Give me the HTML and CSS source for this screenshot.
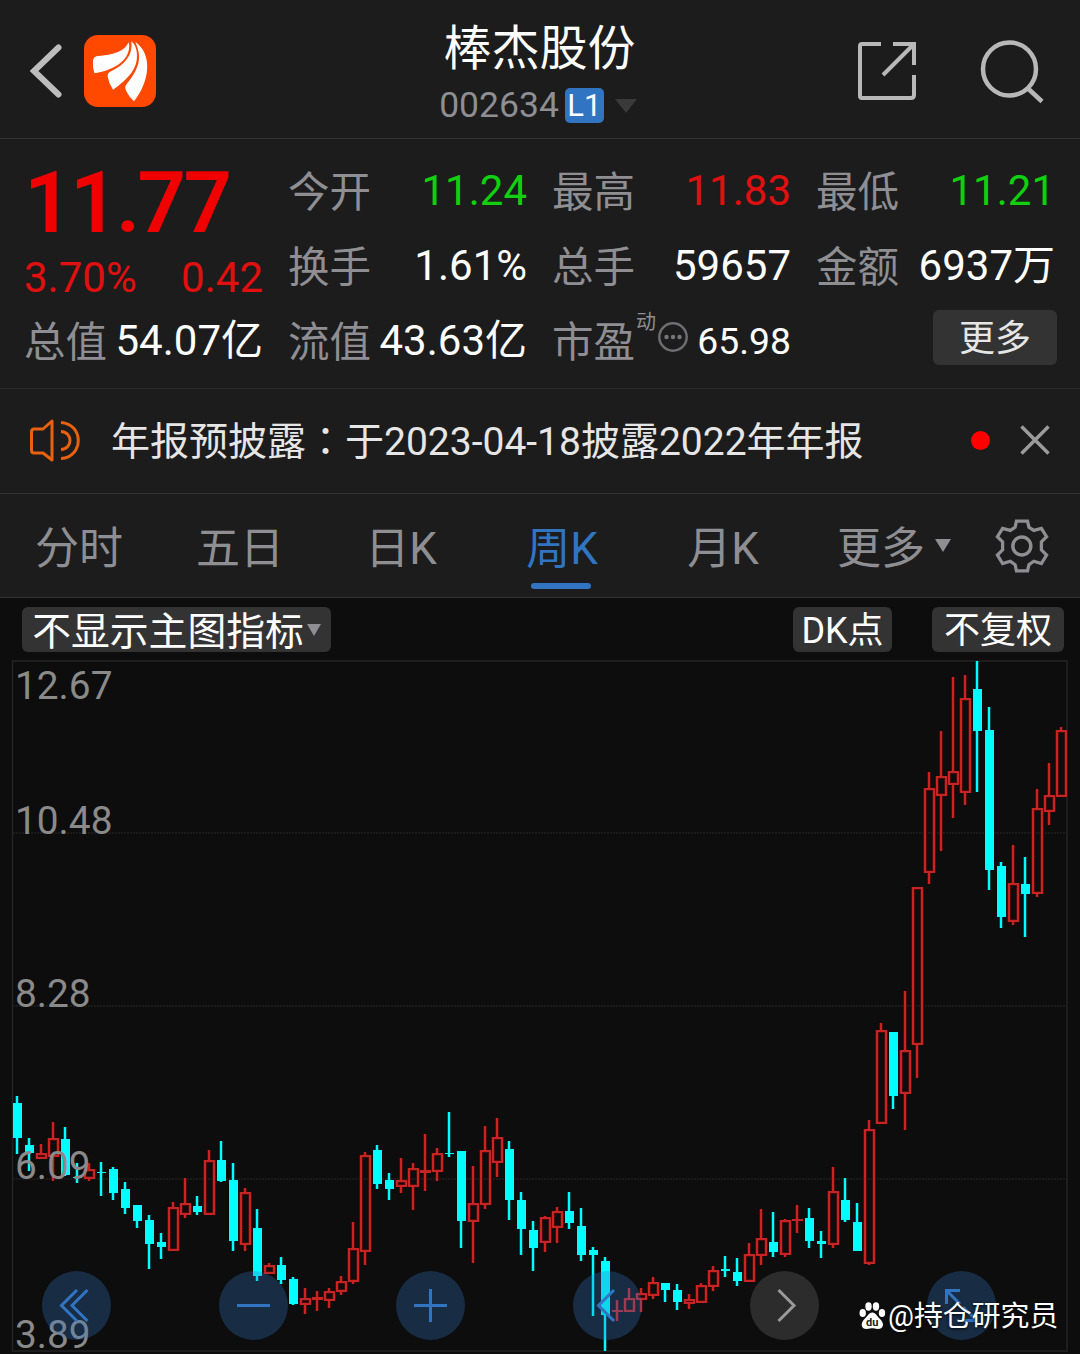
FILE: index.html
```html
<!DOCTYPE html>
<html lang="zh-CN">
<head>
<meta charset="utf-8">
<title>棒杰股份 002634</title>
<link rel="stylesheet" href="styles.css">
</head>
<body>
<header class="topbar">
  <div class="topbar-left">
    <svg class="back" width="36" height="56" viewBox="0 0 36 56"><path d="M30.500 4.500 6 28l24.500 23.500" fill="none" stroke="#bdbdbd" stroke-width="6" stroke-linecap="round"/></svg>
    <svg class="logo" width="72" height="72" viewBox="253 106 216 216"><rect x="253" y="106" width="216" height="216" rx="42" fill="#ff4800"/><g fill="#fff"><path d="M387 128C375 154 345 166 290 170Q282 172 280 182 278 202 284 221C335 212 388 188 389 138Z"/><path d="M395 125C400 165 378 195 330 217Q323 221 324 231 327 250 340 270C385 238 421 203 410 150Q405 132 395 125Z"/><path d="M407 127C427 172 422 203 379 256Q374 262 380 275 388 292 403 305C448 250 462 165 407 127Z"/></g></svg>
  </div>
  <div class="title">
    <h1>棒杰股份</h1>
    <div class="code"><span>002634</span><b class="level">L1</b><i class="tri tri-dark"></i></div>
  </div>
  <div class="topbar-right">
    <svg width="60" height="62" viewBox="857 40 60 62" fill="none" stroke="#b8b8b8" stroke-width="4"><path d="M881 44H862Q860 44 860 46V96Q860 98 862 98H911Q914 98 914 95V75M893 44H914V65M914 44 883 75"/></svg>
    <svg width="66" height="66" viewBox="979 37.500 66 66" fill="none" stroke="#b8b8b8" stroke-width="4.500"><circle cx="1009.500" cy="68.500" r="26.500"/><path d="M1028 88 1042 101"/></svg>
  </div>
</header>

<section class="quote">
  <div class="last">
    <strong>11.77</strong>
    <div class="change"><span>3.70%</span><span>0.42</span></div>
  </div>
  <div class="cell"><label>今开</label><span class="down">11.24</span></div>
  <div class="cell"><label>最高</label><span class="up">11.83</span></div>
  <div class="cell"><label>最低</label><span class="down">11.21</span></div>
  <div class="cell"><label>换手</label><span>1.61%</span></div>
  <div class="cell"><label>总手</label><span>59657</span></div>
  <div class="cell"><label>金额</label><span>6937万</span></div>
  <div class="cell"><label>总值</label><span>54.07亿</span></div>
  <div class="cell"><label>流值</label><span>43.63亿</span></div>
  <div class="cell"><label>市盈</label><sup>动</sup><svg class="info" width="32" height="32" viewBox="0 0 32 32"><circle cx="16" cy="16" r="13.700" fill="none" stroke="#6e6e70" stroke-width="2.500"/><g fill="#77777a"><circle cx="9.500" cy="16" r="2.200"/><circle cx="16" cy="16" r="2.200"/><circle cx="22.500" cy="16" r="2.200"/></g></svg><span class="pe">65.98</span></div>
  <div class="cell cell-more"><button class="more">更多</button></div>
</section>

<section class="notice">
  <svg width="54" height="46" viewBox="28 417 54 46" fill="none" stroke="#e8610f" stroke-width="3"><path d="M52 421 43 429H34Q31.500 429 31.500 432V450Q31.500 453 34 453H43L52 460ZM61 422.500C84 424 84 457 61 458.500M61 431.500C73 432 73 449 61 449.500" stroke-linejoin="round"/></svg>
  <p>年报预披露<span class="colon" lang="zh-TW">：</span>于2023-04-18披露2022年年报</p>
  <i class="dot"></i>
  <svg width="30" height="30" viewBox="0 0 30 30"><path d="M1.500 1.500 28.500 28.500M28.500 1.500 1.500 28.500" stroke="#9c9c9c" stroke-width="3.500"/></svg>
</section>

<nav class="tabs">
  <a>分时</a><a>五日</a><a>日K</a><a class="active">周K</a><a>月K</a>
  <a class="tab-more">更多<i class="tri"></i></a>
  <svg class="gear" width="54" height="54" viewBox="438 58 154 156" fill="none" stroke="#8e8e93" stroke-width="9.500"><path d="M499 64H531L535 82 549 91 571 85 586 109 571 124V147L586 162 571 187 549 180 535 190 531 208H499L495 190 481 180 459 187 444 162 459 147V124L444 109 459 85 481 91 495 82Z"/><circle cx="514.500" cy="136" r="26" stroke-width="10"/></svg>
</nav>

<main class="chart">
  <div class="tools">
    <button class="pill pill-main">不显示主图指标<i class="tri tri-sm"></i></button>
    <button class="pill pill-dk">DK点</button>
    <button class="pill pill-fq">不复权</button>
  </div>
  <svg class="plot" viewBox="0 654 1080 700" width="1080" height="700">
    <rect x="12.500" y="661" width="1054.500" height="690" fill="none" stroke="#242424" stroke-width="1.500"/>
    <path d="M13 833H1066M13 1006H1066M13 1179H1066" stroke="#202020" stroke-width="1.500" stroke-dasharray="2 1"/>
    <g id="candles" shape-rendering="crispEdges"></g>
    <g class="axis">
      <text x="15" y="699">12.67</text>
      <text x="15" y="834">10.48</text>
      <text x="15" y="1007">8.28</text>
      <text x="15" y="1179">6.09</text>
      <text x="15" y="1348">3.89</text>
    </g>
  </svg>
  <div class="controls">
    <button class="ctl"><svg viewBox="0 0 69 69"><path d="M35 19 19.500 34.500 35 50M45.500 19 30 34.500 45.500 50"/></svg></button>
    <button class="ctl"><svg viewBox="0 0 69 69"><path d="M18 34.500H51"/></svg></button>
    <button class="ctl"><svg viewBox="0 0 69 69"><path d="M18 34.500H51M34.500 18V51"/></svg></button>
    <button class="ctl"><svg viewBox="0 0 69 69"><path d="M41 19 25.500 34.500 41 50"/></svg></button>
    <button class="ctl ctl-off"><svg viewBox="0 0 69 69"><path d="M28.500 19 44 34.500 28.500 50"/></svg></button>
    <button class="ctl"><svg viewBox="0 0 69 69"><path d="M33 19.500H19.500V33M19.500 19.500 33 33M36 49.500H49.500V36M49.500 49.500 36 36"/></svg></button>
  </div>
  <div class="watermark">
    <svg width="27" height="28" viewBox="0 0 27 28"><g fill="#fff"><ellipse cx="3.700" cy="11" rx="3.200" ry="4"/><ellipse cx="9.500" cy="4.500" rx="3.200" ry="4.200"/><ellipse cx="17" cy="4.500" rx="3.200" ry="4.200"/><ellipse cx="23" cy="11" rx="3.200" ry="4"/><path d="M13.300 10.500C17 10.500 18 14.500 21.500 17.500 26 22 24 27 19 27 16 27 15 26.300 13.300 26.300S10.500 27 7.500 27C2.500 27 1 22 5 17.500 8.500 14.500 9.600 10.500 13.300 10.500Z"/></g><text x="13.300" y="24" text-anchor="middle" class="du">du</text></svg>
    <span>@持仓研究员</span>
  </div>
</main>
<script src="chart.js"></script>
</body>
</html>
```
FILE: styles.css
```css
* { box-sizing: border-box; }
body {
  margin: 0;
  width: 1080px;
  height: 1354px;
  overflow: hidden;
  background: #1c1c1c;
  color: #fff;
  font-family: Roboto, "Noto Sans CJK SC", sans-serif;
  font-weight: 400;
  line-height: 1.2;
}
button { border: 0; padding: 0; font: inherit; color: inherit; }
svg { display: block; flex: none; }
h1, p { margin: 0; }

.tri {
  display: inline-block;
  border: 8px solid transparent;
  border-top: 13px solid #8e8e93;
  border-bottom: 0;
}
.tri-dark { border-width: 14px 11px 0; border-top-color: #3a3a3a; }
.tri-sm { border-width: 12px 7.5px 0; }

/* Header */
.topbar {
  height: 139px;
  border-bottom: 1px solid #333;
  display: grid;
  grid-template-columns: 300px 1fr 300px;
}
.topbar-left { display: flex; align-items: center; padding: 4px 0 0 28px; }
.logo { margin-left: 20px; }
.title { display: flex; flex-direction: column; align-items: center; padding: 15px 1px 0 0; }
h1 { font-size: 48px; line-height: 68px; font-weight: 400; }
.code {
  display: flex;
  align-items: center;
  height: 45px;
  margin-right: 3px;
  font-size: 35.500px;
  color: #8e8e93;
}
.level {
  width: 39px;
  height: 35px;
  margin: 0 11px 0 6px;
  border-radius: 5px;
  background: #3174c2;
  color: #fff;
  font-size: 31px;
  font-weight: 400;
  line-height: 35px;
  text-align: center;
}
.topbar-right { display: flex; align-items: center; justify-content: flex-end; gap: 62px; padding: 4px 35px 0 0; }

/* Quote */
.quote {
  height: 250px;
  padding: 15px 0 0 24px;
  border-bottom: 1px solid #2c2c2e;
  display: grid;
  grid-template-columns: repeat(4, 239px);
  grid-template-rows: repeat(3, 75px);
  column-gap: 25px;
}
.last { grid-row: span 2; color: #f00000; }
.last strong { display: block; font-size: 85px; font-weight: 600; line-height: 98px; letter-spacing: -2.600px; }
.change { display: flex; justify-content: space-between; margin-top: -1px; font-size: 42px; line-height: 54px; color: #e01010; }
.cell {
  display: flex;
  align-items: center;
  font-size: 42px;
  white-space: nowrap;
}
.cell label { margin-top: 2px; font-size: 41.500px; color: #8e8e93; }
.cell span { margin-left: auto; }
.cell .up { color: #e01010; }
.cell .down { color: #10d010; }
.cell sup { align-self: flex-start; font-size: 20px; line-height: 24px; margin: 6px -1px 0 1px; color: #8e8e93; }
.cell .info { margin: -9px 0 0 2px; }
.cell .pe { font-size: 37.300px; }
.cell-more { justify-content: flex-end; }
.more {
  width: 124px;
  height: 55px;
  margin: -8px -2px 0 0;
  padding-top: 5px;
  border-radius: 6px;
  background: #333;
  color: #e6e6e6;
  font-size: 36px;
}

/* Notice */
.notice {
  height: 105px;
  padding: 0 30px 2px 28px;
  border-bottom: 1px solid #333;
  display: flex;
  align-items: center;
  font-size: 39px;
  color: #e6e6e6;
}
.notice p { margin: 4px 0 0 29px; flex: 1; white-space: nowrap; }
.colon { font-family: "Noto Sans CJK TC", sans-serif; line-height: 1; }
.dot { width: 19px; height: 19px; margin-right: 30px; border-radius: 50%; background: #f00; }

/* Period tabs */
.tabs {
  height: 104px;
  border-bottom: 1px solid #333;
  display: flex;
  align-items: center;
  font-size: 44px;
  color: #8e8e93;
}
.tabs a {
  position: relative;
  width: 161px;
  height: 103px;
  display: flex;
  align-items: center;
  justify-content: center;
  padding: 8px 3px 0 0;
}
.tabs .active { color: #3174c2; }
.tabs .active::after {
  content: "";
  position: absolute;
  bottom: 8px;
  left: 48px;
  width: 60px;
  height: 6px;
  border-radius: 3px;
  background: #3174c2;
}
.tabs .tab-more { width: 178px; padding-right: 0; gap: 10px; }
.tab-more .tri { margin-top: -8px; }
.gear { margin-left: 12px; }

/* Chart */
.chart { position: relative; height: 756px; background: #0d0d0d; }
.tools { height: 56px; padding: 9px 16px 0 22px; display: flex; }
.pill {
  height: 45px;
  padding-top: 5px;
  border-radius: 6px;
  background: #333;
  display: flex;
  align-items: center;
  justify-content: center;
  font-size: 36px;
  white-space: nowrap;
}
.pill-main { width: 309px; gap: 3px; font-size: 38.800px; }
.tri-sm { margin-top: -5px; }
.pill-dk { width: 99px; margin-left: auto; }
.pill-fq { width: 132px; margin-left: 40px; }
.axis text { font-size: 38.800px; fill: #8a8a8a; }
.controls {
  position: absolute;
  left: 42px;
  top: 673px;
  display: flex;
  gap: 108px;
}
.ctl { width: 69px; height: 69px; border-radius: 50%; background: rgba(49, 116, 194, .3); }
.ctl svg { fill: none; stroke: #3174c2; stroke-width: 3; }
.ctl-off { background: rgba(255, 255, 255, .13); }
.ctl-off svg { stroke: #9a9a9a; }
.watermark {
  position: absolute;
  left: 859px;
  top: 698px;
  display: flex;
  align-items: center;
  gap: 2px;
  font-size: 28.900px;
  line-height: 40px;
  white-space: nowrap;
  text-shadow: 0 1px 3px #000;
}
.du { font: 700 11px Roboto, sans-serif; fill: #222; text-shadow: none; }
```
FILE: chart.js
```javascript
// Weekly candles: [rising?, high, body top, body bottom, low] in plot units
const candles = [
  [0,1096,1103,1138,1154],[0,1138,1145,1153,1171],[1,1144,1153,1159,1159],[1,1122,1138,1157,1181],
  [0,1127,1139,1175,1176],[0,1163,1177,1178,1183],[1,1163,1169,1179,1181],[0,1162,1172,1173,1196],
  [0,1167,1169,1193,1200],[0,1182,1189,1208,1214],[0,1205,1205,1221,1228],[0,1215,1220,1244,1269],
  [0,1233,1242,1247,1259],[1,1202,1207,1251,1251],[1,1178,1203,1215,1218],[0,1196,1206,1212,1215],
  [1,1150,1160,1215,1215],[0,1141,1160,1181,1182],[0,1163,1180,1241,1251],[1,1188,1192,1245,1251],
  [0,1209,1228,1276,1281],[1,1263,1265,1274,1274],[0,1257,1265,1280,1284],[0,1277,1279,1304,1305],
  [1,1288,1298,1305,1314],[1,1291,1297,1300,1311],[1,1288,1291,1301,1308],[1,1276,1281,1292,1295],
  [1,1222,1248,1282,1284],[1,1152,1155,1252,1265],[0,1145,1150,1184,1189],[0,1173,1180,1189,1200],
  [1,1158,1180,1187,1193],[1,1163,1168,1187,1210],[1,1134,1170,1173,1191],[1,1148,1153,1172,1181],
  [0,1112,1153,1154,1157],[0,1151,1151,1221,1248],[1,1166,1203,1222,1263],[1,1126,1150,1205,1209],
  [1,1118,1137,1163,1177],[0,1141,1149,1200,1220],[0,1192,1200,1229,1255],[0,1221,1230,1248,1271],
  [1,1216,1217,1243,1252],[1,1207,1211,1228,1243],[0,1192,1211,1223,1229],[0,1208,1226,1255,1261],
  [0,1247,1250,1255,1316],[0,1257,1261,1315,1351],[1,1300,1310,1312,1321],[1,1288,1298,1312,1312],
  [1,1288,1293,1300,1312],[1,1277,1282,1296,1299],[0,1283,1283,1290,1302],[0,1284,1290,1302,1310],
  [1,1294,1299,1304,1309],[1,1283,1285,1303,1303],[1,1266,1270,1287,1291],[0,1256,1269,1271,1277],
  [0,1258,1272,1281,1286],[1,1243,1254,1282,1282],[1,1209,1238,1256,1265],[0,1212,1242,1252,1257],
  [1,1219,1220,1255,1257],[1,1205,1219,1221,1233],[0,1208,1218,1241,1248],[0,1231,1241,1244,1258],
  [1,1167,1191,1245,1248],[0,1178,1200,1220,1222],[0,1203,1222,1251,1251],[1,1120,1129,1264,1265],
  [1,1023,1030,1124,1124],[0,1032,1032,1096,1109],[1,991,1050,1094,1130],[1,887,887,1045,1078],
  [1,772,788,873,884],[1,731,776,796,851],[1,677,771,785,818],[1,675,698,793,805],
  [0,661,689,731,792],[0,707,730,870,890],[0,862,866,917,928],[1,845,883,922,925],
  [0,857,884,894,937],[1,789,808,894,897],[1,763,795,812,825],[1,727,730,797,797]
];
const layer = document.getElementById("candles");
function box(x, y, w, h, fill) {
  if (h <= 0) return;
  const r = document.createElementNS("http://www.w3.org/2000/svg", "rect");
  Object.entries({ x, y, width: w, height: h, fill }).forEach(([k, v]) => r.setAttribute(k, v));
  layer.appendChild(r);
}
// A line with a faint edge of the same hue around it
function line(x, y, w, h, fill, edge) {
  if (h <= 0) return;
  box(x - 1, y, w + 2, h, edge);
  box(x, y, w, h, fill);
}
candles.forEach(([rising, high, top, bottom, low], i) => {
  const x = 17 + 12 * i;
  const color = rising ? "#c82424" : "#00ffff";
  const edge = rising ? "#4a0a0a" : "#064848";
  line(x - 1, high, 2, top - high, color, edge);
  line(x - 1, bottom, 2, low - bottom, color, edge);
  if (!rising) {
    box(x - 4, top, 9, bottom - top, color);
  } else if (bottom - top <= 4) {
    box(x - 5, top, 11, bottom - top, color);
  } else {
    line(x - 5, top, 2, bottom - top, color, edge);
    line(x + 4, top, 2, bottom - top, color, edge);
    box(x - 3, top + 2, 7, 1, edge);
    box(x - 3, bottom - 3, 7, 1, edge);
    box(x - 5, top, 11, 2, color);
    box(x - 5, bottom - 2, 11, 2, color);
  }
});
```
